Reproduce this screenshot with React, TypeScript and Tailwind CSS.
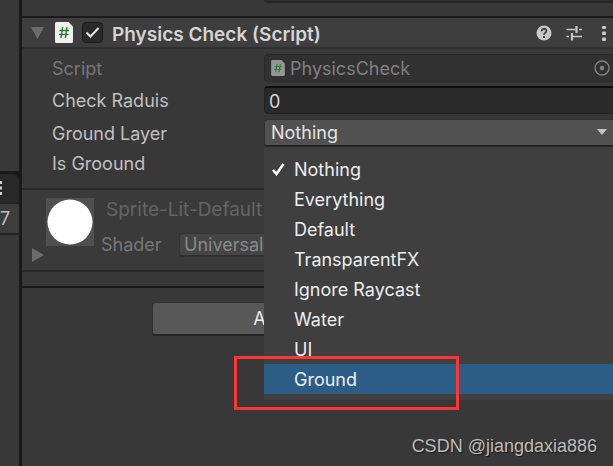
import { useState } from "react";
import clsx from "clsx";

const layers = [
  "Nothing",
  "Everything",
  "Default",
  "TransparentFX",
  "Ignore Raycast",
  "Water",
  "UI",
  "Ground",
];

const ScriptIcon = ({ className }: { className?: string }) => (
  <svg viewBox="0 0 18 21" className={className} aria-hidden="true">
    <path d="M1.5 0H13.5L18 4.5V19.5Q18 21 16.5 21H1.5Q0 21 0 19.5V1.5Q0 0 1.5 0Z" fill="currentColor" />
    <path d="M7.6 5L6 16M12 5L10.400 16M4.500 8.500H14M4 12.500H13.500" stroke="#2f7a34" strokeWidth="1.4" fill="none" />
  </svg>
);

const MoreIcon = () => (
  <svg viewBox="0 0 4 16" className="h-4 w-1" fill="#c8c8c8" aria-hidden="true">
    <rect x="0" y="1" width="4" height="3" rx="1" />
    <rect x="0" y="6.500" width="4" height="3.500" rx="1" />
    <rect x="0" y="12.500" width="4" height="3.500" rx="1" />
  </svg>
);

const SidePanel = () => (
  <aside className="w-[22px] shrink-0 overflow-hidden border-r-[3px] border-[#1a1a1a]">
    <div className="h-[171px]" />
    <div className="border-t-[3px] border-[#191919] bg-[#191919]">
      <div className="flex h-7 items-center rounded-tr-md bg-[#282828]">
        <svg viewBox="0 0 2 16" className="h-4 w-0.5" fill="#d2d2d2" aria-hidden="true">
          <path d="M0 1h2v3H0zM0 6.500h2v3H0zM0 12h2v3H0z" />
        </svg>
      </div>
    </div>
    <div className="flex h-[33px] items-center border-y-2 border-y-[#232323] bg-[#3c3c3c] text-lg text-[#bdbdbd]">7</div>
  </aside>
);

const ComponentHeader = () => {
  const [enabled, setEnabled] = useState(true);

  return (
    <header className="flex h-[33px] items-center border-t-2 border-b-2 border-t-[#1a1a1a] border-b-[#303030] bg-[#3e3e3e] pl-[9px]">
      <button type="button" aria-label="Collapse" className="shrink-0">
        <svg viewBox="0 0 13 12" className="h-3 w-[13px]" aria-hidden="true">
          <path d="M0 0H13L6.500 12Z" fill="#6c6c6c" />
        </svg>
      </button>
      <ScriptIcon className="ml-[11px] h-[21px] w-[18px] shrink-0 text-[#f0f0f0]" />
      <label className="relative ml-[9px] flex shrink-0">
        <input
          type="checkbox"
          aria-label="Enable Physics Check"
          checked={enabled}
          onChange={(e) => setEnabled(e.target.checked)}
          className="h-[21px] w-[21px] appearance-none rounded border border-[#1c1c1c] bg-[#2a2a2a]"
        />
        {enabled && (
          <svg viewBox="0 0 21 21" className="pointer-events-none absolute inset-0" aria-hidden="true">
            <path d="M4.500 10.500L8.500 14.500L16.500 6" fill="none" stroke="#e6e6e6" strokeWidth="2" />
          </svg>
        )}
      </label>
      <h2 className="ml-[9px] pt-1 text-[19px] leading-6 font-semibold whitespace-nowrap text-[#d4d4d4]">Physics Check (Script)</h2>
      <div className="ml-auto flex items-center gap-3.5 pr-[7px]">
        <button type="button" aria-label="Help">
          <svg viewBox="0 0 16 16" className="h-4 w-4" aria-hidden="true">
            <circle cx="8" cy="8" r="7.500" fill="#c8c8c8" />
            <path d="M5.600 6.200C5.600 3 10.400 3 10.400 6C10.400 7.900 8 7.900 8 9.800" fill="none" stroke="#3e3e3e" strokeWidth="1.800" />
            <rect x="7" y="11" width="2" height="2" fill="#3e3e3e" />
          </svg>
        </button>
        <button type="button" aria-label="Presets">
          <svg viewBox="0 0 16 16" className="h-4 w-4" fill="none" stroke="#c8c8c8" aria-hidden="true">
            <path d="M0.500 4.500H9.500M13 4.500H16M0.500 11.500H3M7 11.500H16" strokeWidth="1.400" />
            <path d="M10.500 1V8M6 8V15.500" strokeWidth="2.200" />
          </svg>
        </button>
        <button type="button" aria-label="More" className="ml-1.5">
          <MoreIcon />
        </button>
      </div>
    </header>
  );
};

const LayerField = () => {
  const [layer, setLayer] = useState("Nothing");
  const [active, setActive] = useState("Ground");

  return (
    <div className="relative min-w-0 flex-1">
      <select
        id="ground-layer"
        value={layer}
        onChange={(e) => setLayer(e.target.value)}
        className="block h-7 w-full appearance-none rounded-l border border-r-0 border-b-2 border-[#303030] border-b-[#242424] bg-[#515151] pl-1.5 text-lg leading-6 text-[#e4e4e4]"
      >
        {layers.map((name) => (
          <option key={name}>{name}</option>
        ))}
      </select>
      <svg viewBox="0 0 10 6" className="pointer-events-none absolute top-2.5 right-1.5 h-1.5 w-2.5" aria-hidden="true">
        <path d="M0 0H10L5 6Z" fill="#c4c4c4" />
      </svg>

      {/* Open layer menu */}
      <ul className="absolute top-full right-0 left-0 z-10 bg-[#3f3f3f] pt-[7px] pb-1.5">
        {layers.map((name) => (
          <li key={name} className="relative">
            <button
              type="button"
              onMouseEnter={() => setActive(name)}
              onClick={() => setLayer(name)}
              className={clsx(
                "flex h-[30px] w-full items-center pt-0.5 pl-2 text-left text-lg text-[#eeeeee]",
                active === name && "bg-[#2c5d87]"
              )}
            >
              <span className="w-[22px]">
                {layer === name && (
                  <svg viewBox="0 0 13 13" className="mb-0.5 h-[13px] w-[13px]" aria-hidden="true">
                    <path d="M1 7L4.500 11L11.500 1" fill="none" stroke="#ffffff" strokeWidth="2.600" />
                  </svg>
                )}
              </span>
              {name}
            </button>
            {name === "Ground" && (
              <div className="pointer-events-none absolute -top-2 -left-[30px] h-[54px] w-[225px] border-[3px] border-[#ff3636]" />
            )}
          </li>
        ))}
      </ul>
    </div>
  );
};

const labelClass = "w-[212px] shrink-0 text-lg leading-6 pt-0.5 text-[#c0c0c0]";

const Properties = () => {
  const [radius, setRadius] = useState("0");

  return (
    <div className="flex flex-col gap-1 pt-[5px] pb-[13px] pl-[30px]">
      <div className="flex h-7 items-center">
        <label htmlFor="script" className="w-[212px] shrink-0 pt-0.5 text-lg leading-6 text-[#777777]">Script</label>
        <div className="flex h-7 min-w-0 flex-1 items-center rounded-l border border-r-0 border-[#292929] bg-[#313131] pr-[3px] pl-1.5">
          <ScriptIcon className="h-4 w-3.5 shrink-0 text-[#959595]" />
          <input
            id="script"
            readOnly
            value="PhysicsCheck"
            className="ml-[5px] min-w-0 flex-1 bg-transparent pt-0.5 text-lg leading-6 text-[#808080] outline-none"
          />
          <button type="button" aria-label="Select script">
            <svg viewBox="0 0 16 16" className="h-4 w-4" aria-hidden="true">
              <circle cx="8" cy="8" r="7" fill="none" stroke="#858585" strokeWidth="1.300" />
              <circle cx="8" cy="8" r="2.200" fill="#858585" />
            </svg>
          </button>
        </div>
      </div>
      <div className="flex h-7 items-center">
        <label htmlFor="radius" className={labelClass}>Check Raduis</label>
        <input
          id="radius"
          value={radius}
          onChange={(e) => setRadius(e.target.value)}
          className="h-7 min-w-0 flex-1 rounded-l border border-t-2 border-r-0 border-[#212121] border-t-[#0d0d0d] bg-[#2a2a2a] pt-0.5 pl-1 text-lg leading-6 text-[#d8d8d8] outline-none"
        />
      </div>
      <div className="flex h-[29px] items-end">
        <label htmlFor="ground-layer" className={clsx(labelClass, "self-center")}>Ground Layer</label>
        <LayerField />
      </div>
      <div className="flex h-6 items-center">
        <label htmlFor="is-ground" className={labelClass}>Is Groound</label>
        <input id="is-ground" type="checkbox" className="h-5 w-5 appearance-none rounded bg-[#2a2a2a]" />
      </div>
    </div>
  );
};

const Material = () => (
  <section className="flex h-[84px] border-y-2 border-[#2b2b2b] bg-[#3a3a3a] pt-2 pl-2.5">
    <button type="button" aria-label="Expand material" className="mb-2 self-end">
      <svg viewBox="0 0 12 14" className="h-3.5 w-3" aria-hidden="true">
        <path d="M0 0L12 7L0 14Z" fill="#6c6c6c" />
      </svg>
    </button>
    <svg viewBox="0 0 48 48" className="ml-0.5 h-12 w-12 shrink-0" aria-hidden="true">
      <rect width="48" height="48" fill="#505050" />
      <circle cx="24" cy="24" r="22.500" fill="#ffffff" />
    </svg>
    <div className="min-w-0 pl-[7px]">
      <h3 className="pl-[5px] text-[19px] leading-6 whitespace-nowrap text-[#646464]">Sprite-Lit-Default</h3>
      <div className="mt-[11px] flex items-center">
        <label htmlFor="shader" className="w-[78px] text-lg leading-6 text-[#777777]">Shader</label>
        <select
          id="shader"
          className="h-6 w-80 appearance-none rounded border border-b-2 border-[#353535] border-b-[#303030] bg-[#454545] pl-1 text-lg leading-5 text-[#8a8a8a]"
        >
          <option>Universal</option>
        </select>
      </div>
    </div>
  </section>
);

const App = () => {
  return (
    <div className="flex min-h-screen overflow-hidden bg-[#383838] font-[Inter,sans-serif]">
      <SidePanel />
      <main className="relative flex min-w-0 flex-1 flex-col">
        <div className="mb-[13px] ml-[242px] h-[3px] rounded-bl border-b-2 border-[#242424] bg-[#2d2d2d]" />
        <ComponentHeader />
        <Properties />
        <Material />
        <div className="mt-3.5 flex justify-center border-t-2 border-[#1a1a1a] pt-3.5 pl-2.5">
          <button
            type="button"
            className="h-[34px] w-[342px] rounded border border-b-2 border-[#303030] border-b-[#242424] bg-[#585858] text-lg text-[#eeeeee]"
          >
            Add Component
          </button>
        </div>
        <footer className="mt-auto pr-4 pb-1.5 text-right font-['Liberation_Sans',sans-serif] text-lg text-[#bcbcbc] [text-shadow:1px_1px_1px_#1c1c1c]">
          CSDN @jiangdaxia886
        </footer>
      </main>
    </div>
  );
};

export default App;
